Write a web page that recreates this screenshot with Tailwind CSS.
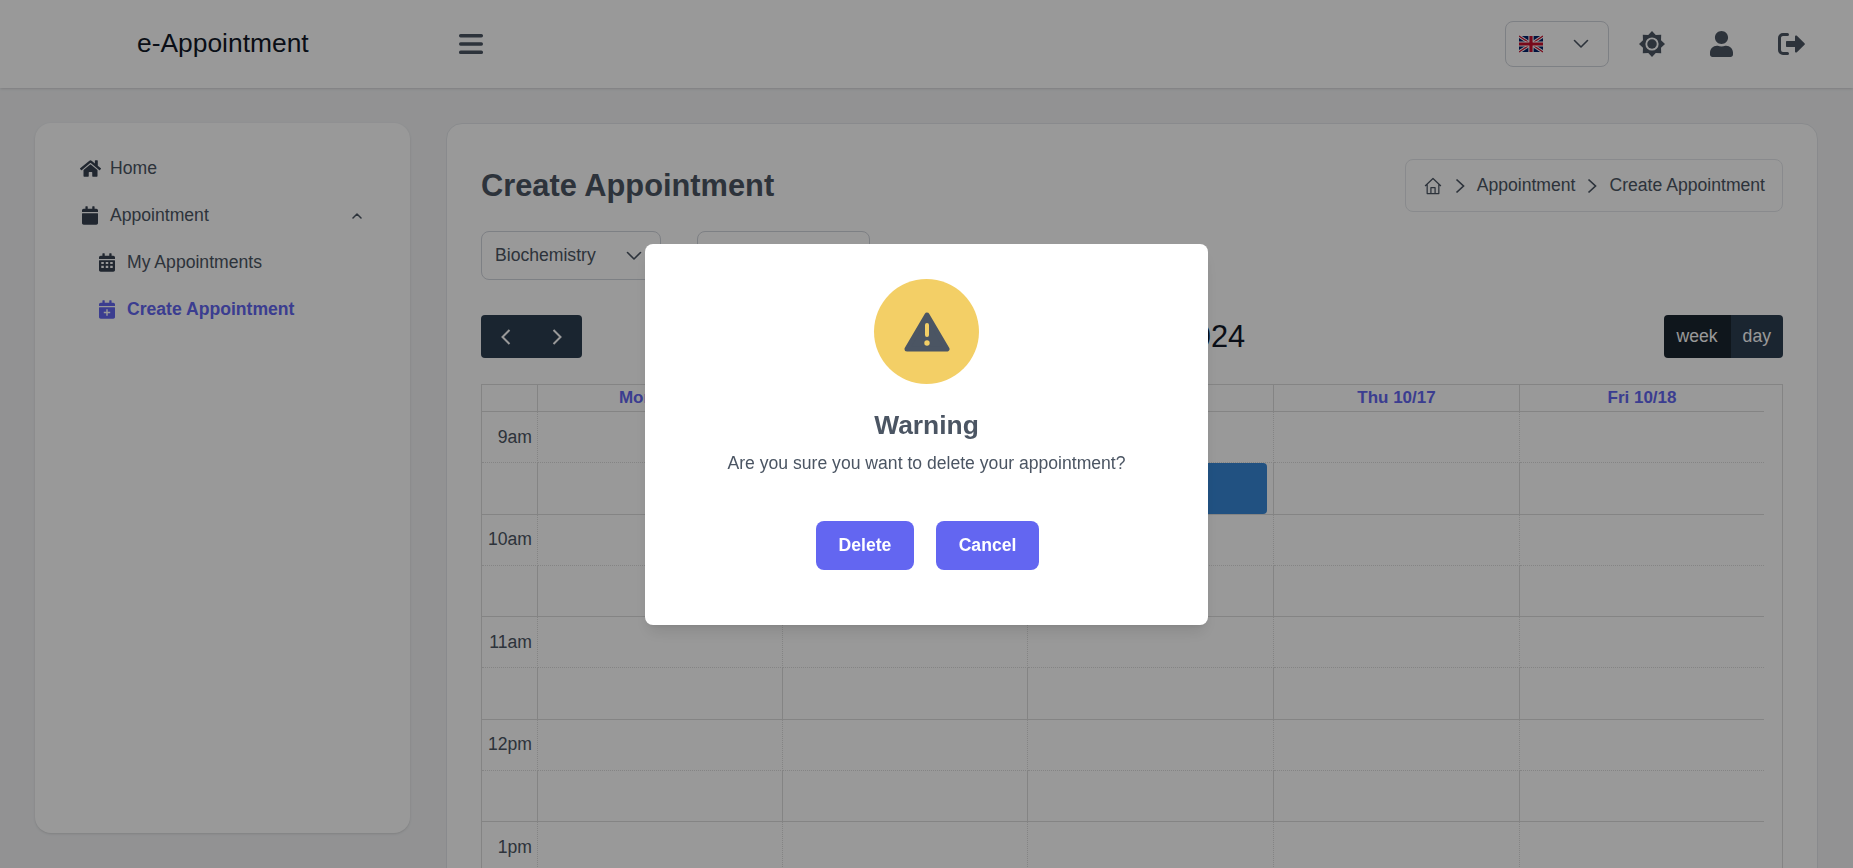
<!DOCTYPE html>
<html lang="en">
<head>
<meta charset="utf-8">
<title>e-Appointment</title>
<script src="https://cdn.jsdelivr.net/npm/@tailwindcss/browser@4"></script>
</head>
<body class="h-screen overflow-hidden bg-[#f3f4f6] font-['Liberation_Sans',Arial,sans-serif] text-[17.6px] text-[#4b5563]">

<!-- top bar -->
<header class="flex items-center h-[88px] bg-white shadow relative">
  <div class="w-[459px] pl-[137px] text-[26.4px] text-[#111827]">e-Appointment</div>
  <svg class="w-[24px] h-[28px] text-[#4b5563]" viewBox="0 0 24 28" fill="currentColor">
    <rect x="0" y="4" width="24" height="3.4" rx="1.6"/>
    <rect x="0" y="12.3" width="24" height="3.4" rx="1.6"/>
    <rect x="0" y="20.6" width="24" height="3.4" rx="1.6"/>
  </svg>
  <div class="ml-auto flex items-center pr-[48px]">
    <div class="flex items-center justify-between w-[104px] h-[46px] pl-[13px] pr-[19px] border border-gray-300 rounded-lg">
      <svg class="w-[24px] h-[18px]" viewBox="0 0 60 40">
        <rect width="60" height="40" fill="#012169"/>
        <path d="M0 0L60 40M60 0L0 40" stroke="#fff" stroke-width="8"/>
        <path d="M0 0L60 40M60 0L0 40" stroke="#C8102E" stroke-width="3"/>
        <path d="M30 0V40M0 20H60" stroke="#fff" stroke-width="13"/>
        <path d="M30 0V40M0 20H60" stroke="#C8102E" stroke-width="8"/>
      </svg>
      <svg class="w-[16px] h-[16px] text-[#4b5563]" viewBox="0 0 16 16" fill="none" stroke="currentColor" stroke-width="1.6" stroke-linecap="round" stroke-linejoin="round"><path d="M1.5 4.5L8 11l6.5-6.5"/></svg>
    </div>
    <svg class="ml-[30px] w-[26px] h-[26px] text-[#4b5563]" viewBox="0 0 24 24">
      <polygon fill="currentColor" points="24,12 20.32,15.45 20.49,20.49 15.45,20.32 12,24 8.55,20.32 3.51,20.49 3.68,15.45 0,12 3.68,8.55 3.51,3.51 8.55,3.68 12,0 15.45,3.68 20.49,3.51 20.32,8.55"/>
      <circle cx="12" cy="12" r="6.1" fill="#fff"/>
      <circle cx="12" cy="12" r="4.4" fill="currentColor"/>
    </svg>
    <svg class="ml-[45px] w-[23px] h-[26px] text-[#4b5563]" viewBox="0 0 448 512" preserveAspectRatio="none" fill="currentColor"><path d="M224 256c70.7 0 128-57.3 128-128S294.7 0 224 0 96 57.3 96 128s57.3 128 128 128zm89.6 32h-16.7c-22.2 10.2-46.9 16-72.9 16s-50.6-5.8-72.9-16h-16.7C60.2 288 0 348.2 0 422.4V464c0 26.5 21.5 48 48 48h352c26.5 0 48-21.5 48-48v-41.6c0-74.2-60.2-134.4-134.4-134.4z"/></svg>
    <svg class="ml-[45px] w-[27px] h-[22px] text-[#4b5563]" viewBox="0 0 27 22">
      <path d="M9.5 1.5H5A3.5 3.5 0 0 0 1.5 5v12A3.5 3.5 0 0 0 5 20.5h4.5" fill="none" stroke="currentColor" stroke-width="3" stroke-linecap="round"/>
      <path d="M9 8h8V3.6c0-1 1.1-1.5 1.9-.8l7.6 7.4c.5.5.5 1.2 0 1.6l-7.6 7.4c-.8.7-1.9.2-1.9-.8V14H9c-.6 0-1-.4-1-1V9c0-.6.4-1 1-1z" fill="currentColor"/>
    </svg>
  </div>
</header>

<div class="flex items-start gap-[36px] px-[35px] pt-[35px]">
  <!-- sidebar -->
  <aside class="w-[375px] h-[710px] shrink-0 bg-white rounded-2xl shadow pt-[22px] pl-[45px] pr-[45px]">
    <div class="flex items-center h-[47px] gap-[9px]">
      <svg class="w-[21px] h-[19px] text-[#374151]" viewBox="0 0 576 512" fill="currentColor"><path d="M280.37 148.26L96 300.11V464a16 16 0 0 0 16 16l112.06-.29a16 16 0 0 0 15.92-16V368a16 16 0 0 1 16-16h64a16 16 0 0 1 16 16v95.64a16 16 0 0 0 16 16.05L464 480a16 16 0 0 0 16-16V300L295.67 148.26a12.19 12.19 0 0 0-15.3 0zM571.6 251.47L488 182.56V44.05a12 12 0 0 0-12-12h-56a12 12 0 0 0-12 12v72.61L318.47 43a48 48 0 0 0-61 0L4.34 251.47a12 12 0 0 0-1.6 16.9l25.5 31A12 12 0 0 0 45.15 301l235.22-193.74a12.19 12.19 0 0 1 15.3 0L530.9 301a12 12 0 0 0 16.9-1.6l25.5-31a12 12 0 0 0-1.7-16.93z"/></svg>
      <span>Home</span>
    </div>
    <div class="flex items-center h-[47px] gap-[12px] pl-[2px]">
      <svg class="w-[16px] h-[19px] text-[#374151]" viewBox="0 0 448 512" fill="currentColor"><path d="M12 192h424c6.6 0 12 5.4 12 12v260c0 26.5-21.5 48-48 48H48c-26.5 0-48-21.5-48-48V204c0-6.6 5.4-12 12-12zm436-44v-36c0-26.5-21.5-48-48-48h-48V12c0-6.6-5.4-12-12-12h-40c-6.6 0-12 5.4-12 12v52H160V12c0-6.6-5.4-12-12-12h-40c-6.6 0-12 5.4-12 12v52H48C21.5 64 0 85.5 0 112v36c0 6.6 5.4 12 12 12h424c6.6 0 12-5.4 12-12z"/></svg>
      <span>Appointment</span>
      <svg class="ml-auto mr-[3px] w-[10px] h-[10px] text-[#4b5563]" viewBox="0 0 10 10" fill="none" stroke="currentColor" stroke-width="1.5" stroke-linecap="round" stroke-linejoin="round"><path d="M1 7l4-4 4 4"/></svg>
    </div>
    <div class="flex items-center h-[47px] gap-[12px] pl-[19px]">
      <svg class="w-[16px] h-[19px] text-[#374151]" viewBox="0 0 448 512" fill="currentColor">
        <path d="M12 192h424c6.6 0 12 5.4 12 12v260c0 26.5-21.5 48-48 48H48c-26.5 0-48-21.5-48-48V204c0-6.6 5.4-12 12-12zm436-44v-36c0-26.5-21.5-48-48-48h-48V12c0-6.6-5.4-12-12-12h-40c-6.6 0-12 5.4-12 12v52H160V12c0-6.6-5.4-12-12-12h-40c-6.6 0-12 5.4-12 12v52H48C21.5 64 0 85.5 0 112v36c0 6.6 5.4 12 12 12h424c6.6 0 12-5.4 12-12z"/>
        <path fill="#fff" d="M64 240h70v60H64zM189 240h70v60h-70zM314 240h70v60h-70zM64 350h70v60H64zM189 350h70v60h-70zM314 350h70v60h-70z"/>
      </svg>
      <span>My Appointments</span>
    </div>
    <div class="flex items-center h-[47px] gap-[12px] pl-[19px] text-[#6366f1] font-bold">
      <svg class="w-[16px] h-[19px]" viewBox="0 0 448 512" fill="currentColor">
        <path d="M12 192h424c6.6 0 12 5.4 12 12v260c0 26.5-21.5 48-48 48H48c-26.5 0-48-21.5-48-48V204c0-6.6 5.4-12 12-12zm436-44v-36c0-26.5-21.5-48-48-48h-48V12c0-6.6-5.4-12-12-12h-40c-6.6 0-12 5.4-12 12v52H160V12c0-6.6-5.4-12-12-12h-40c-6.6 0-12 5.4-12 12v52H48C21.5 64 0 85.5 0 112v36c0 6.6 5.4 12 12 12h424c6.6 0 12-5.4 12-12z"/>
        <path fill="#fff" d="M204 250h40v70h70v40h-70v70h-40v-70h-70v-40h70z"/>
      </svg>
      <span>Create Appointment</span>
    </div>
  </aside>

  <!-- main card -->
  <main class="flex-1 min-w-0 h-[900px] bg-white border border-gray-200 rounded-2xl px-[34px] pt-[35px]">
    <div class="flex items-center justify-between h-[53px]">
      <h1 class="pt-[2px] text-[30.8px] font-bold">Create Appointment</h1>
      <div class="flex items-center h-[53px] px-[17px] gap-[11px] border border-gray-200 rounded-lg">
        <svg class="w-[20px] h-[20px]" viewBox="0 0 24 24" fill="none" stroke="currentColor" stroke-width="1.5" stroke-linejoin="round"><path d="M2.5 12L12 3l9.5 9M5 10v11h14V10M9.5 21v-7h5v7"/></svg>
        <svg class="w-[12px] h-[16px]" viewBox="0 0 12 16" fill="none" stroke="currentColor" stroke-width="1.7"><path d="M2.5 1.5L9.5 8l-7 6.5"/></svg>
        <span>Appointment</span>
        <svg class="w-[12px] h-[16px]" viewBox="0 0 12 16" fill="none" stroke="currentColor" stroke-width="1.7"><path d="M2.5 1.5L9.5 8l-7 6.5"/></svg>
        <span>Create Appointment</span>
      </div>
    </div>

    <div class="flex gap-[36px] mt-[19px]">
      <div class="flex items-center justify-between w-[180px] h-[49px] pl-[13px] pr-[18px] border border-gray-300 rounded-lg">
        <span>Biochemistry</span>
        <svg class="w-[16px] h-[16px]" viewBox="0 0 16 16" fill="none" stroke="currentColor" stroke-width="1.6" stroke-linecap="round" stroke-linejoin="round"><path d="M1.5 4.5L8 11l6.5-6.5"/></svg>
      </div>
      <div class="w-[173px] h-[49px] border border-gray-300 rounded-lg"></div>
    </div>

    <!-- calendar toolbar -->
    <div class="flex items-center justify-between mt-[35px] h-[43px]">
      <div class="flex items-center w-[101px] h-[43px] bg-[#2c3e50] rounded text-white">
        <span class="flex-1 flex justify-center"><svg class="w-[12px] h-[18px]" viewBox="0 0 12 18" fill="none" stroke="currentColor" stroke-width="2"><path d="M9.5 2L2.5 9l7 7"/></svg></span>
        <span class="flex-1 flex justify-center"><svg class="w-[12px] h-[18px]" viewBox="0 0 12 18" fill="none" stroke="currentColor" stroke-width="2"><path d="M2.5 2L9.5 9l-7 7"/></svg></span>
      </div>
      <h2 class="pt-[2px] text-[30.8px] text-[#111827]">Oct 14 – 18, 2024</h2>
      <div class="flex h-[43px] rounded overflow-hidden text-white">
        <span class="flex items-center px-[13px] bg-[#1a252f]">week</span>
        <span class="flex items-center px-[12px] bg-[#2c3e50]">day</span>
      </div>
    </div>

    <!-- week grid, rows filled in below -->
    <div class="mt-[26px] border-t border-l border-r border-[#ddd]">
      <div class="grid grid-cols-[56px_245px_245px_246px_246px_244px_18px] h-[27px] text-center text-[17px] font-bold text-[#6366f1]">
        <div class="border-r border-b border-[#ddd]"></div>
        <div class="border-r border-b border-[#ddd]">Mon 10/14</div>
        <div class="border-r border-b border-[#ddd]">Tue 10/15</div>
        <div class="border-r border-b border-[#ddd]">Wed 10/16</div>
        <div class="border-r border-b border-[#ddd]">Thu 10/17</div>
        <div class="border-b border-[#ddd]">Fri 10/18</div>
      </div>
      <div id="slots"></div>
    </div>
  </main>
</div>

<!-- warning modal -->
<div class="fixed inset-0 z-10 bg-black/40 flex justify-center items-start pt-[244px]">
  <div class="flex flex-col items-center w-[563px] h-[381px] bg-white rounded-lg shadow-lg pt-[35px]">
    <div class="flex items-center justify-center w-[105px] h-[105px] rounded-full bg-[#f3cf66]">
      <svg class="w-[46px] h-[40px]" viewBox="0 0 46 40">
        <path d="M23 3L43 37H3z" fill="#4b5563" stroke="#4b5563" stroke-width="5" stroke-linejoin="round"/>
        <rect x="21" y="11" width="4" height="14" rx="2" fill="#f3cf66"/>
        <circle cx="23" cy="31" r="2.7" fill="#f3cf66"/>
      </svg>
    </div>
    <h3 class="mt-[25px] text-[26.4px] leading-[32px] font-bold text-[#4b5563]">Warning</h3>
    <p class="mt-[10px] leading-[24px] text-[#4b5563]">Are you sure you want to delete your appointment?</p>
    <div class="flex gap-[22px] mt-[46px] ml-[2px]">
      <button class="w-[98px] h-[49px] rounded-lg bg-[#6366f1] text-white font-bold">Delete</button>
      <button class="w-[103px] h-[49px] rounded-lg bg-[#6366f1] text-white font-bold">Cancel</button>
    </div>
  </div>
</div>

<script>
  var labels = ['9am', '', '10am', '', '11am', '', '12pm', '', '1pm'];
  var slots = document.getElementById('slots');
  labels.forEach(function (label, i) {
    var row = document.createElement('div');
    row.className = 'grid grid-cols-[56px_245px_245px_246px_246px_244px_18px] h-[51.25px]';
    for (var c = 0; c < 6; c++) {
      var cell = document.createElement('div');
      cell.className = (i % 2 ? 'border-b border-[#ddd]' : 'border-b border-dotted border-[#ddd]') + (c < 5 ? ' border-r' : '');
      if (c == 0) {
        cell.className += ' flex items-center justify-end pr-[5px]';
        cell.innerText = label;
      }
      if (c == 3 && i == 1) {
        var ev = document.createElement('div');
        ev.className = 'h-full mr-[6px] bg-[#3788d8] rounded-sm';
        cell.appendChild(ev);
      }
      row.appendChild(cell);
    }
    slots.appendChild(row);
  });
</script>
</body>
</html>
